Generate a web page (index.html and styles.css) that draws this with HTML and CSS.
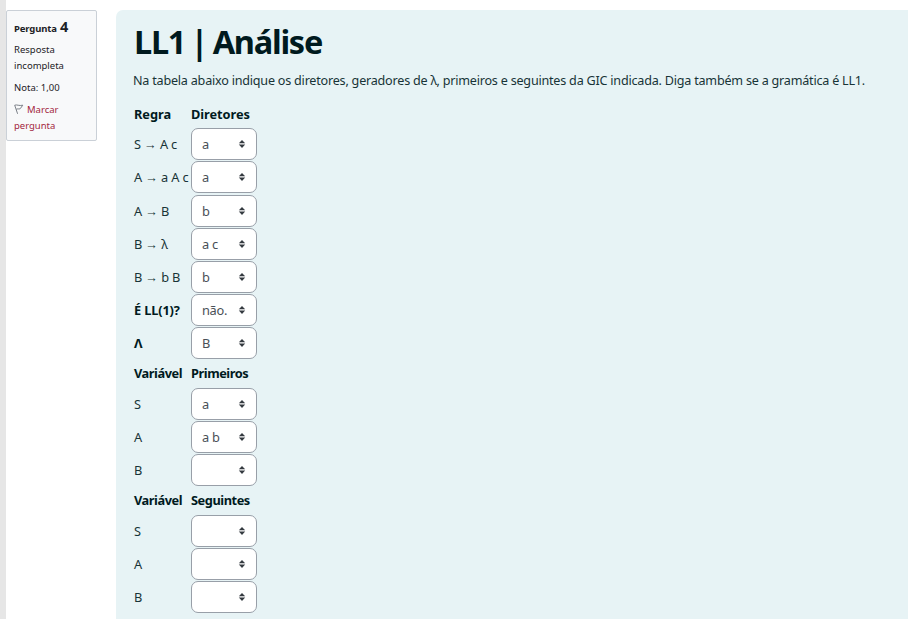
FILE: index.html
```html
<!DOCTYPE html>
<html lang="pt">
<head>
<meta charset="utf-8">
<title>LL1 | Análise</title>
<link rel="stylesheet" href="styles.css">
</head>
<body>
<svg class="defs" aria-hidden="true"><symbol id="sort" viewBox="0 0 8 10"><path d="M4 .9 7.2 4.3H.8ZM.8 5.6H7.2L4 9Z"/></symbol></svg>
<main class="question">
  <aside class="info">
    <h3 class="number">Pergunta <b>4</b></h3>
    <div class="state">Resposta<br>incompleta</div>
    <div class="grade">Nota: 1,00</div>
    <a class="flag"><svg viewBox="0 0 10 11"><path d="M.7 1.2 3.6 9.8M.7 1.2C3 .3 5 2.2 8.8 1.2L6.2 4.7C4.8 5.4 3.5 4.4 2.2 5.3" /></svg><span>Marcar</span><br>pergunta</a>
  </aside>
  <section class="content">
    <h1>LL1 | Análise</h1>
    <p>Na tabela abaixo indique os diretores, geradores de λ, primeiros e seguintes da GIC indicada. Diga também se a gramática é LL1.</p>
    <div class="table">
      <div class="row head first"><b>Regra</b><b>Diretores</b></div>
      <div class="row"><span>S → A c</span><div class="select">a<svg><use href="#sort"/></svg></div></div>
      <div class="row"><span>A → a A c</span><div class="select">a<svg><use href="#sort"/></svg></div></div>
      <div class="row"><span>A → B</span><div class="select">b<svg><use href="#sort"/></svg></div></div>
      <div class="row"><span>B → λ</span><div class="select">a c<svg><use href="#sort"/></svg></div></div>
      <div class="row"><span>B → b B</span><div class="select">b<svg><use href="#sort"/></svg></div></div>
      <div class="row"><b>É LL(1)?</b><div class="select">não.<svg><use href="#sort"/></svg></div></div>
      <div class="row"><b>Λ</b><div class="select">B<svg><use href="#sort"/></svg></div></div>
      <div class="row head"><b>Variável</b><b>Primeiros</b></div>
      <div class="row"><span>S</span><div class="select">a<svg><use href="#sort"/></svg></div></div>
      <div class="row"><span>A</span><div class="select">a b<svg><use href="#sort"/></svg></div></div>
      <div class="row"><span>B</span><div class="select"><svg><use href="#sort"/></svg></div></div>
      <div class="row head"><b>Variável</b><b>Seguintes</b></div>
      <div class="row"><span>S</span><div class="select"><svg><use href="#sort"/></svg></div></div>
      <div class="row"><span>A</span><div class="select"><svg><use href="#sort"/></svg></div></div>
      <div class="row"><span>B</span><div class="select"><svg><use href="#sort"/></svg></div></div>
    </div>
  </section>
</main>
</body>
</html>
```
FILE: styles.css
```css
* { box-sizing: border-box; }
body { margin: 0; background: #fff; font-family: "Noto Sans", "Open Sans", sans-serif; color: #1d2125; overflow: hidden; }
.defs { display: none; }
.question { display: flex; height: 619px; padding-top: 10px; border-left: 6px solid #e6e6e6; align-items: flex-start; }
.info { width: 91px; height: 131px; flex: none; padding: 6px 7px; border: 1px solid #cad0d7; border-radius: 2px; background: #f8f9fa; font-size: 9.5px; line-height: 16px; }
.number { margin: 0; font-size: 9.5px; line-height: 19px; height: 25px; white-space: nowrap; letter-spacing: -.15px; }
.number b { font-size: 14.5px; font-weight: 700; margin-left: 1px; }
.state { margin-bottom: 6px; }
.grade { margin-bottom: 6px; }
.flag { display: block; color: #a31f40; }
.flag svg { width: 10px; height: 11px; margin-right: 3px; vertical-align: -2px; fill: none; stroke: #7b8088; stroke-width: 1; }
.content { margin-left: 19px; flex: 1; height: 609px; padding: 0 18px; background: #e7f3f5; border-radius: 7px 0 0 0; color: #001a1e; }
h1 { margin: 0; padding-top: 12px; height: 61px; font-size: 32.5px; line-height: 40px; font-weight: 700; letter-spacing: -1.25px; word-spacing: -1.8px; white-space: nowrap; }
p { margin: 0 0 0 -1px; height: 29px; font-size: 12.6px; line-height: 19px; letter-spacing: -.22px; white-space: nowrap; color: #183337; }
.row { display: grid; grid-template-columns: 57px 66px; height: 33.1px; align-items: center; font-size: 12.8px; white-space: nowrap; letter-spacing: -.15px; }
.row > span { color: #183337; }
.head { height: 27.8px; letter-spacing: -.45px; }
.first { letter-spacing: -.05px; }
.select { display: flex; align-items: center; height: 32px; padding: 0 10px; border: 1px solid #989fa8; border-radius: 7px; background: #fff; color: #495057; letter-spacing: -.3px; }
.select svg { width: 8px; height: 10px; margin-left: auto; fill: #343a40; }
```
